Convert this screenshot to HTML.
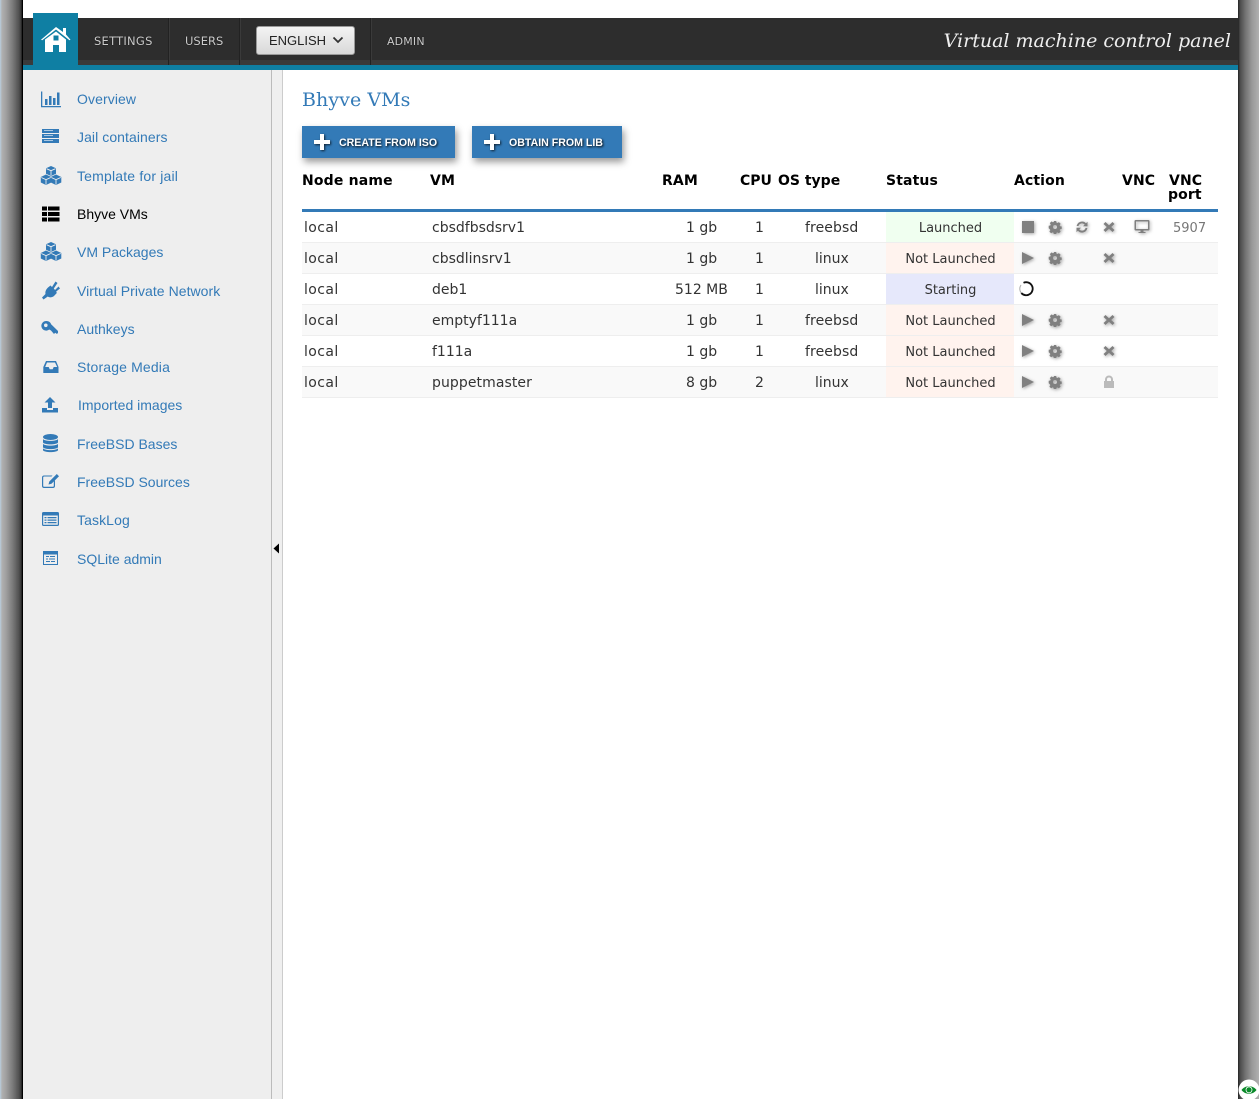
<!DOCTYPE html>
<html><head><meta charset="utf-8"><title>Bhyve VMs</title>
<style>
*{box-sizing:border-box}
html,body{margin:0;padding:0;width:1259px;height:1099px;overflow:hidden;background:#fff}
body{position:relative;font-family:"DejaVu Sans",sans-serif}
.a{position:absolute}
.t{position:absolute;white-space:nowrap;line-height:20px;height:20px}
.nav{font:11.5px/20px "DejaVu Sans",sans-serif;color:#ccc;top:31px;text-shadow:0 0 1px #000}
.sep{position:absolute;top:18px;height:47px;background:#222;border-right:1px solid #3a3a3a;width:2px}
.m{position:absolute;left:77px;font:14px/20px "Liberation Sans",sans-serif;color:#337ab7;white-space:nowrap}
.i{position:absolute;left:40px;width:22px;height:22px;fill:#337ab7}
.btn{position:absolute;top:126px;height:32px;background:#337ab7;box-shadow:2px 4px 7px rgba(0,0,0,.4);color:#fff;font:bold 10.6px/34px "Liberation Sans",sans-serif;text-shadow:1px 1px 2px #000;white-space:nowrap}
.plus{position:absolute;left:12px;top:8px;width:16px;height:16px;filter:drop-shadow(1px 1px 1px rgba(0,0,0,.7))}
.h{position:absolute;font:bold 14px/14px "DejaVu Sans",sans-serif;color:#000;white-space:nowrap;letter-spacing:.12px}
.row{position:absolute;left:302px;width:916px;height:31px;border-bottom:1px solid #eee}
.c{position:absolute;top:6px;font:14px/20px "DejaVu Sans",sans-serif;color:#333;white-space:nowrap}
.l{letter-spacing:.4px}
.s{position:absolute;left:584px;top:0;width:128px;height:30px;text-align:center;font:13px/33px "DejaVu Sans",sans-serif;color:#333;padding-left:1px}
.g{position:absolute;width:14px;height:14px;fill:#808080;filter:drop-shadow(1.5px 1.5px 1.5px rgba(0,0,0,.35))}
</style></head><body>
<svg width="0" height="0" style="position:absolute"><defs>
<symbol id="play" viewBox="0 0 14 14"><path d="M1 1L13 7L1 13Z"/></symbol>
<symbol id="stop" viewBox="0 0 14 14"><rect x="1" y="1" width="12" height="12"/></symbol>
<symbol id="gear" viewBox="0 0 14 14"><path fill-rule="evenodd" d="M5.800 1h2.400l.3 1.600 1 .4 1.400-.9 1.700 1.700-.9 1.400.4 1 1.600.3v2.400l-1.600.3-.4 1 .9 1.400-1.700 1.700-1.400-.9-1 .4-.3 1.600H5.800l-.3-1.600-1-.4-1.400.9-1.700-1.700.9-1.400-.4-1L.7 8.200V5.800l1.600-.3.4-1-.9-1.400 1.700-1.700 1.400.9 1-.4zM7 5a2 2 0 100 4 2 2 0 000-4z"/></symbol>
<symbol id="x" viewBox="0 0 14 14"><path d="M3.500 2L7 5.200 10.500 2 12.500 4 9.200 7 12.500 10 10.500 12 7 8.800 3.500 12 1.500 10 4.800 7 1.500 4z"/></symbol>
<symbol id="ref" viewBox="0 0 14 14"><path d="M7 1.500a5.500 5.500 0 014 1.700L12.500 1.700V6.300H8L9.700 4.600A3.600 3.600 0 003.500 6H1.600A5.500 5.500 0 017 1.500zM1.500 7.700H6L4.300 9.400A3.600 3.600 0 0010.500 8h1.900A5.500 5.500 0 012.900 10.800L1.500 12.300z"/></symbol>
<symbol id="lock" viewBox="0 0 14 14"><path fill-rule="evenodd" d="M3 6V4.500a4 4 0 018 0V6h1v7H2V6zM5 6h4V4.500a2 2 0 00-4 0z"/></symbol>
<symbol id="cubes" viewBox="0 0 22 22"><path d="M11 1L16 3.300V8.800L11 11 6 8.800V3.300zM6 9.500L11.300 12V17.500L6 20 .8 17.500V12zM16 9.500L21.300 12V17.500L16 20 10.800 17.500V12z"/><path d="M6.500 3.700L11 5.700 15.500 3.700M11 5.700V10.500M1.300 12.500L6 14.600 10.800 12.500M6 14.600V19.500M11.300 12.500L16 14.600 20.800 12.500M16 14.600V19.500" stroke="#eee" stroke-width=".9" fill="none"/></symbol>
</defs></svg>

<div class="a" style="left:0;top:0;width:23px;height:1099px;background:linear-gradient(90deg,#b9cfe0 0,#b0b0b0 2px,#a0a0a0 6px,#787878 13px,#505050 19px,#333 21.500px,#000 22px,#000 23px)"></div>
<div class="a" style="left:1238px;top:0;width:21px;height:1099px;background:linear-gradient(90deg,#222 0,#4a4a4a 2px,#707070 7px,#999 14px,#b0b0b0 21px)"></div>

<div class="a" style="left:23px;top:18px;width:1215px;height:42px;background:#2d2d2d"></div>
<div class="a" style="left:23px;top:60px;width:1215px;height:5px;background:#3a3a3a"></div>
<div class="a" style="left:23px;top:65px;width:1215px;height:5px;background:#0f7fa3"></div>
<div class="a" style="left:33px;top:13px;width:45px;height:52px;background:#0f7fa3"></div>
<svg class="a" style="left:33px;top:13px" width="45" height="52" viewBox="0 0 45 52"><path fill="#fff" d="M23 14L30 19V15H33V21.500L37.500 26.800 36.500 27.300 23 16.500 9.200 27.300 8 26.800z"/><path fill="#fff" fill-rule="evenodd" d="M23 18.500L33 26.500V39H26V32H20V39H12V26.500zM20.500 22.500V27.500H25.500V22.500z"/><path fill="#0f7fa3" d="M22.600 22.500v5h.8v-5zM20.500 24.600h5v.8h-5z"/></svg>
<div class="t nav" style="left:94px;letter-spacing:.25px">SETTINGS</div>
<div class="sep" style="left:168px"></div>
<div class="t nav" style="left:185px">USERS</div>
<div class="sep" style="left:239px"></div>
<div class="a" style="left:256px;top:26px;width:99px;height:29px;border:1px solid #999;border-radius:3px;background:linear-gradient(#f4f4f4,#d8d8d8);font:13px/27px 'Liberation Sans',sans-serif;color:#222;padding-left:12px">ENGLISH<svg class="a" style="left:75px;top:9px" width="12" height="8" viewBox="0 0 12 8"><path d="M1.500 1.500L6 6 10.500 1.500" fill="none" stroke="#333" stroke-width="1.800"/></svg></div>
<div class="sep" style="left:370px"></div>
<div class="t nav" style="left:387px;font-size:11px;top:31.500px;letter-spacing:.15px">ADMIN</div>
<div class="t" style="left:880px;width:351px;top:30px;text-align:right;font:italic 19px/22px 'DejaVu Serif',serif;color:#eee">Virtual machine control panel</div>

<div class="a" style="left:23px;top:70px;width:248px;height:1029px;background:#eee"></div>
<div class="a" style="left:271px;top:70px;width:12px;height:1029px;background:#efefef;border-left:1px solid #bbb;border-right:1px solid #ccc"></div>
<svg class="a" style="left:273px;top:543px" width="7" height="11" viewBox="0 0 7 11"><path d="M6 .5V10.500L.5 5.500z" fill="#000"/></svg>

<svg class="i" style="top:89px" viewBox="0 0 22 22"><path d="M1 2.500h1.300V17H21v1.300H1z"/><path d="M5 10h2.500v6H5zM9 7h2.500v9H9zM13 9h2.500v7H13zM17 3.500h2.500V16H17z"/></svg>
<div class="m" style="top:89px;letter-spacing:.1px">Overview</div>
<svg class="i" style="top:126px" viewBox="0 0 22 22"><path d="M2 3h17v4H2zM2 8h17v4H2zM2 13h17v4H2z"/><path d="M4 4.500h9M4 9.500h9M4 14.500h9" stroke="#cfe0f0" stroke-width=".8"/></svg>
<div class="m" style="top:127px;letter-spacing:.07px">Jail containers</div>
<svg class="i" style="top:165px"><use href="#cubes"/></svg>
<div class="m" style="top:166px;letter-spacing:.18px">Template for jail</div>
<svg class="i" style="top:203px;fill:#000" viewBox="0 0 22 22"><path d="M2 3.500h5v4H2zM8 3.500h11.500v4H8zM2 9h5v4H2zM8 9h11.500v4H8zM2 14.500h5v4H2zM8 14.500h11.500v4H8z"/></svg>
<div class="m" style="top:204px;color:#000">Bhyve VMs</div>
<svg class="i" style="top:241px"><use href="#cubes"/></svg>
<div class="m" style="top:242px">VM Packages</div>
<svg class="i" style="top:280px" viewBox="0 0 22 22"><path d="M2 17.500L5.500 14C5 11.500 6 9.500 8 7.500L10.500 5.500 12 7 15.500 1.500 17.500 3 13.800 8.500 15 10 18.500 6.500 20 8.500 16.200 11.500 16.800 13 14 16C12 17.500 9.500 17.800 7.800 16.500L3.500 19.500z"/></svg>
<div class="m" style="top:281px;letter-spacing:.05px">Virtual Private Network</div>
<svg class="i" style="top:318px" viewBox="0 0 22 22"><path fill-rule="evenodd" d="M6.500 3a4.800 4.800 0 014.600 3.300L18 13v1.700l-1 1.300-1.800-1.300-1.200 1.300-3-3.500-1.800-1A4.800 4.800 0 116.500 3zM5.800 5.500a1.800 1.800 0 100 3.600 1.800 1.800 0 000-3.600z"/></svg>
<div class="m" style="top:319px">Authkeys</div>
<svg class="i" style="top:356px" viewBox="0 0 22 22"><path fill-rule="evenodd" d="M6 5h10l2.500 6v6H3.300v-6zM7 6.500l-1.800 4.500h3.500l1 2.200h3l1-2.200h3.500L15 6.500z"/></svg>
<div class="m" style="top:357px;letter-spacing:.15px">Storage Media</div>
<svg class="i" style="top:394px" viewBox="0 0 22 22"><path d="M10 3L15.500 8.500H12V14H8V8.500H4.500zM2 14H7V16H13V14H18V18.500H2z"/></svg>
<div class="m" style="top:395px;left:78px">Imported images</div>
<svg class="i" style="top:433px" viewBox="0 0 22 22"><ellipse cx="10.500" cy="4" rx="7.500" ry="3"/><path d="M3 6C4.500 8.500 16.500 8.500 18 6V9.500C16.500 12 4.500 12 3 9.500zM3 10.700C4.500 13.200 16.500 13.200 18 10.700V14.200C16.500 16.700 4.500 16.700 3 14.200zM3 15.300C4.500 17.800 16.500 17.800 18 15.300V17.200C16.500 19.700 4.500 19.700 3 17.200z"/></svg>
<div class="m" style="top:434px">FreeBSD Bases</div>
<svg class="i" style="top:471px" viewBox="0 0 22 22"><path d="M4 4.500H12.500L11.500 5.500H4.300C3.600 5.500 3.200 5.900 3.200 6.600V14.700C3.200 15.400 3.600 15.800 4.300 15.800H12.700C13.400 15.800 13.800 15.400 13.800 14.700V10.500L15 9.300V15C15 16.200 14.200 17 13 17H4C2.800 17 2 16.200 2 15V6.500C2 5.300 2.800 4.500 4 4.500z"/><path d="M16.800 3L19 5.200 11.500 12.800 8.500 13.500 9.300 10.500z"/></svg>
<div class="m" style="top:472px">FreeBSD Sources</div>
<svg class="i" style="top:509px" viewBox="0 0 22 22"><path fill-rule="evenodd" d="M3.500 3h14c1 0 1.500.5 1.500 1.500v11c0 1-.5 1.500-1.500 1.500h-14C2.500 17 2 16.500 2 15.500v-11C2 3.500 2.500 3 3.500 3zM3.200 6.500v9.300h14.600V6.500z"/><path d="M4.500 8h2v1.300h-2zM7.500 8h9v1.300h-9zM4.500 10.500h2v1.300h-2zM7.500 10.500h9v1.300h-9zM4.500 13h2v1.300h-2zM7.500 13h9v1.300h-9z"/></svg>
<div class="m" style="top:510px;letter-spacing:.1px">TaskLog</div>
<svg class="i" style="top:548px" viewBox="0 0 22 22"><path fill-rule="evenodd" d="M3 3h15v14H3zM4 6.500V16h13V6.500z"/><path d="M5 4h1.200v1.200H5zM7.500 4h1.200v1.200H7.500zM10 4h1.200v1.200H10zM6 8h3v1h-3zM10 8h5v1h-5zM6 10.500h2v1H6zM9 10.500h6v1H9zM6 13h4v1H6zM11 13h4v1h-4z"/></svg>
<div class="m" style="top:549px">SQLite admin</div>

<div class="t" style="left:302px;top:87px;height:26px;font:19px/26px 'DejaVu Serif',serif;color:#337ab7;letter-spacing:.07px">Bhyve VMs</div>
<div class="btn" style="left:302px;width:153px;padding-left:37px"><svg class="plus" viewBox="0 0 16 16"><path fill="#fff" d="M6 0h4v6h6v4h-6v6H6v-6H0V6h6z"/></svg>CREATE FROM ISO</div>
<div class="btn" style="left:472px;width:150px;padding-left:37px"><svg class="plus" viewBox="0 0 16 16"><path fill="#fff" d="M6 0h4v6h6v4h-6v6H6v-6H0V6h6z"/></svg>OBTAIN FROM LIB</div>

<div class="h" style="left:302px;top:174px;letter-spacing:.17px">Node name</div>
<div class="h" style="left:430px;top:174px">VM</div>
<div class="h" style="left:662px;top:174px">RAM</div>
<div class="h" style="left:740px;top:174px;letter-spacing:0">CPU</div>
<div class="h" style="left:778px;top:174px;letter-spacing:0">OS type</div>
<div class="h" style="left:886px;top:174px">Status</div>
<div class="h" style="left:1014px;top:174px">Action</div>
<div class="h" style="left:1122px;top:174px">VNC</div>
<div class="h" style="left:1169px;top:174px">VNC</div>
<div class="h" style="left:1168px;top:188px">port</div>
<div class="a" style="left:302px;top:209px;width:916px;height:3px;background:#337ab7"></div>

<div class="row" style="top:212px">
<div class="c l" style="left:2px">local</div><div class="c" style="left:130px">cbsdfbsdsrv1</div><div class="c" style="left:384px">1 gb</div><div class="c" style="left:453px">1</div><div class="c" style="left:503px;letter-spacing:.1px">freebsd</div>
<div class="s" style="background:#f0fff0">Launched</div>
<svg class="g" style="left:719px;top:8px"><use href="#stop"/></svg><svg class="g" style="left:746px;top:8px"><use href="#gear"/></svg><svg class="g" style="left:773px;top:8px"><use href="#ref"/></svg><svg class="g" style="left:800px;top:8px"><use href="#x"/></svg>
<svg class="g" style="left:832px;top:7px;width:16px;height:15px" viewBox="0 0 16 15"><path fill-rule="evenodd" d="M1.500 1h13c.5 0 1 .5 1 1v8.500c0 .5-.5 1-1 1H9.500v1.500h2v1h-7v-1h2v-1.500H1.500c-.5 0-1-.5-1-1V2c0-.5.5-1 1-1zM2 2.500V10h12V2.500z"/></svg>
<div class="c" style="left:871px;top:7px;font-size:13px;color:#777">5907</div>
</div>
<div class="row" style="top:243px;background:#f9f9f9">
<div class="c l" style="left:2px">local</div><div class="c" style="left:130px">cbsdlinsrv1</div><div class="c" style="left:384px">1 gb</div><div class="c" style="left:453px">1</div><div class="c" style="left:513px">linux</div>
<div class="s" style="background:#fff3ee">Not Launched</div>
<svg class="g" style="left:719px;top:8px"><use href="#play"/></svg><svg class="g" style="left:746px;top:8px"><use href="#gear"/></svg><svg class="g" style="left:800px;top:8px"><use href="#x"/></svg>
</div>
<div class="row" style="top:274px">
<div class="c l" style="left:2px">local</div><div class="c" style="left:130px">deb1</div><div class="c" style="left:373px">512 MB</div><div class="c" style="left:453px">1</div><div class="c" style="left:513px">linux</div>
<div class="s" style="background:#e6e8fb">Starting</div>
<svg class="a" style="left:716px;top:6px" width="17" height="17" viewBox="0 0 17 17"><path d="M3.300 13A6.500 6.500 0 1 0 5.500 2.800" fill="none" stroke="#111" stroke-width="1.800"/><path d="M3.300 13A6.500 6.500 0 0 1 3 5" fill="none" stroke="#aaa" stroke-width="1"/></svg>
</div>
<div class="row" style="top:305px;background:#f9f9f9">
<div class="c l" style="left:2px">local</div><div class="c" style="left:130px">emptyf111a</div><div class="c" style="left:384px">1 gb</div><div class="c" style="left:453px">1</div><div class="c" style="left:503px;letter-spacing:.1px">freebsd</div>
<div class="s" style="background:#fff3ee">Not Launched</div>
<svg class="g" style="left:719px;top:8px"><use href="#play"/></svg><svg class="g" style="left:746px;top:8px"><use href="#gear"/></svg><svg class="g" style="left:800px;top:8px"><use href="#x"/></svg>
</div>
<div class="row" style="top:336px">
<div class="c l" style="left:2px">local</div><div class="c" style="left:130px">f111a</div><div class="c" style="left:384px">1 gb</div><div class="c" style="left:453px">1</div><div class="c" style="left:503px;letter-spacing:.1px">freebsd</div>
<div class="s" style="background:#fff3ee">Not Launched</div>
<svg class="g" style="left:719px;top:8px"><use href="#play"/></svg><svg class="g" style="left:746px;top:8px"><use href="#gear"/></svg><svg class="g" style="left:800px;top:8px"><use href="#x"/></svg>
</div>
<div class="row" style="top:367px;background:#f9f9f9">
<div class="c l" style="left:2px">local</div><div class="c" style="left:130px;letter-spacing:.08px">puppetmaster</div><div class="c" style="left:384px">8 gb</div><div class="c" style="left:453px">2</div><div class="c" style="left:513px">linux</div>
<div class="s" style="background:#fff3ee">Not Launched</div>
<svg class="g" style="left:719px;top:8px"><use href="#play"/></svg><svg class="g" style="left:746px;top:8px"><use href="#gear"/></svg><svg class="g" style="left:800px;top:8px;fill:#bbb;filter:none"><use href="#lock"/></svg>
</div>

<svg class="a" style="left:1238px;top:1079px" width="21" height="20" viewBox="0 0 21 20"><circle cx="11" cy="11" r="10.500" fill="#fff"/><path d="M3.500 11C7 6 15 6 18.500 11 15 16 7 16 3.500 11z" fill="#0a8a2a"/><circle cx="11" cy="10.800" r="3.400" fill="#fff"/><circle cx="11" cy="10.800" r="2.600" fill="#0a8a2a"/></svg>
</body></html>
